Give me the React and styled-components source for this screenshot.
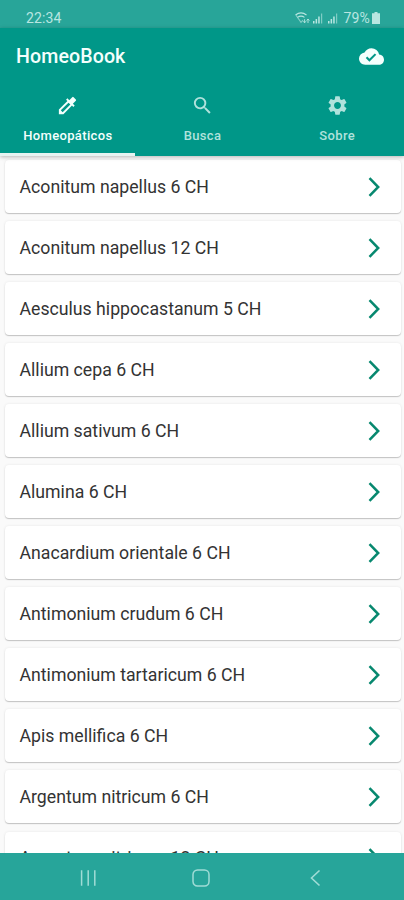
import React from "react";
import styled, { createGlobalStyle } from "styled-components";
import { MdCloudDone, MdColorize, MdSearch, MdSettings } from "react-icons/md";

const GlobalStyle = createGlobalStyle`
  *, *::before, *::after { box-sizing: border-box; }
  body { margin: 0; background: #fafafa; font-family: Roboto, sans-serif; }
`;

const Screen = styled.div`
  display: flex;
  flex-direction: column;
  width: 404px;
  height: 900px;
  overflow: hidden;
  background: #fafafa;
`;

const StatusBar = styled.div`
  display: flex;
  flex: none;
  align-items: center;
  justify-content: space-between;
  height: 28px;
  padding: 8px 24px 0 26px;
  background: #28a599;
  color: #b9e6e1;
  font-size: 14px;
  line-height: 20px;
`;

const Clock = styled.span`
  letter-spacing: 0.15px;
`;

const StatusIcons = styled.div`
  display: flex;
  align-items: center;
  svg { display: block; }
`;

const Percent = styled.span`
  margin: 0 2px 0 4px;
  letter-spacing: 0.15px;
`;

const Header = styled.header`
  position: relative;
  flex: none;
  height: 128px;
  background: #009788;
  box-shadow: 0 1px 4px rgba(0, 0, 0, 0.28);
`;

const AppBar = styled.div`
  display: flex;
  align-items: center;
  justify-content: space-between;
  height: 56px;
  padding: 0 20px 0 16px;
  color: #f4fffd;
`;

const Title = styled.h1`
  margin: 2px 0 0;
  font-size: 19.6px;
  font-weight: 500;
  line-height: 26px;
  letter-spacing: 0.1px;
`;

const Tabs = styled.nav`
  display: grid;
  grid-template-columns: repeat(3, 1fr);
  height: 72px;
`;

const Tab = styled.div`
  display: flex;
  flex-direction: column;
  align-items: center;
  padding: 10px 0 0 1px;
  color: ${({ $active }) => ($active ? "#f4fffd" : "#b0e2dc")};
  border-bottom: 3px solid ${({ $active }) => ($active ? "#e6f3f1" : "transparent")};
  svg { display: block; flex: none; }
`;

const TabLabel = styled.span`
  margin-top: 11px;
  font-size: 13px;
  font-weight: 500;
  line-height: 16px;
  letter-spacing: 0.35px;
`;

const List = styled.main`
  display: flex;
  flex: 1;
  flex-direction: column;
  gap: 8.05px;
  min-height: 0;
  padding: 4px 3px 0 5px;
  overflow: hidden;
`;

const Card = styled.div`
  display: flex;
  flex: none;
  align-items: center;
  justify-content: space-between;
  height: 53px;
  padding: 0 21px 0 14.5px;
  border-radius: 4px;
  background: #fff;
  box-shadow: 0 1px 1px rgba(0, 0, 0, 0.2), 0 0 3px rgba(0, 0, 0, 0.08);
  svg { display: block; }
`;

const Name = styled.span`
  color: #333;
  font-size: 17.7px;
  line-height: 24px;
  white-space: nowrap;
`;

const SystemNav = styled.footer`
  display: grid;
  flex: none;
  grid-template-columns: 113px 118px 11px;
  align-items: center;
  height: 47px;
  padding: 3px 0 0 79px;
  background: #27a59a;
  color: #a0dcd6;
  svg { display: block; }
`;

const remedies = [
  "Aconitum napellus 6 CH",
  "Aconitum napellus 12 CH",
  "Aesculus hippocastanum 5 CH",
  "Allium cepa 6 CH",
  "Allium sativum 6 CH",
  "Alumina 6 CH",
  "Anacardium orientale 6 CH",
  "Antimonium crudum 6 CH",
  "Antimonium tartaricum 6 CH",
  "Apis mellifica 6 CH",
  "Argentum nitricum 6 CH",
  "Argentum nitricum 12 CH",
];

const tabs = [
  { label: "Homeopáticos", Icon: MdColorize, active: true },
  { label: "Busca", Icon: MdSearch },
  { label: "Sobre", Icon: MdSettings },
];

const WifiIcon = () => (
  <svg width="15" height="12" viewBox="0 0 15 12" fill="none" stroke="currentColor" strokeWidth="1.1">
    <path d="M0.5 3Q6 -1.2 11.5 3M2.5 5.4Q6 2.8 9.5 5.4" />
    <path d="M1 3.3L6 10.3L8 8" opacity="0.65" />
    <path d="M9.6 7.2v3.6M8 9.2l1.6 1.6L11 9.2M13 11V7M11.6 8.6L13 7l1.4 1.6" strokeWidth="0.9" />
  </svg>
);

const SignalIcon = () => (
  <svg width="15" height="12" viewBox="0 0 15 12" fill="currentColor">
    <path d="M3 9h1.5v2.5H3zM5.6 7h1.5v4.5H5.6zM8.2 4.5h1.5v7H8.2z" />
    <path d="M11 1.5h1.2v10H11z" opacity="0.6" />
  </svg>
);

const BatteryIcon = () => (
  <svg width="8" height="12" viewBox="0 0 8 12" fill="currentColor">
    <path d="M2.5 0h3v1.2H8V12H0V1.2h2.5z" />
  </svg>
);

const Chevron = () => (
  <svg width="12" height="20" viewBox="0 0 12 20" fill="none" stroke="#07886f" strokeWidth="2.5">
    <path d="M1.5 1.2L10.2 10L1.5 18.8" />
  </svg>
);

export default function App() {
  return (
    <Screen>
      <GlobalStyle />
      <StatusBar>
        <Clock>22:34</Clock>
        <StatusIcons>
          <WifiIcon />
          <SignalIcon />
          <SignalIcon />
          <Percent>79%</Percent>
          <BatteryIcon />
        </StatusIcons>
      </StatusBar>
      <Header>
        <AppBar>
          <Title>HomeoBook</Title>
          <MdCloudDone size={25} />
        </AppBar>
        <Tabs>
          {tabs.map(({ label, Icon, active }) => (
            <Tab key={label} $active={active}>
              <Icon size={23} />
              <TabLabel>{label}</TabLabel>
            </Tab>
          ))}
        </Tabs>
      </Header>
      <List>
        {remedies.map((name) => (
          <Card key={name}>
            <Name>{name}</Name>
            <Chevron />
          </Card>
        ))}
      </List>
      <SystemNav>
        <svg width="18" height="18" viewBox="0 0 18 18" stroke="currentColor" strokeWidth="1.5">
          <path d="M2.6 1.3v15.4M9.2 1.3v15.4M15.8 1.3v15.4" />
        </svg>
        <svg width="18" height="18" viewBox="0 0 18 18" fill="none" stroke="currentColor" strokeWidth="1.5">
          <rect x="1" y="1" width="16" height="16" rx="4.5" />
        </svg>
        <svg width="11" height="18" viewBox="0 0 11 18" fill="none" stroke="currentColor" strokeWidth="1.6">
          <path d="M9.5 1.5L1.5 9l8 7.5" />
        </svg>
      </SystemNav>
    </Screen>
  );
}
